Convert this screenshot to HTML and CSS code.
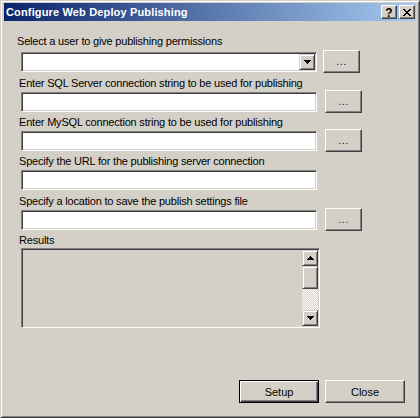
FILE: index.html
```html
<!DOCTYPE html>
<html>
<head>
<meta charset="utf-8">
<title>Configure Web Deploy Publishing</title>
<link rel="stylesheet" href="styles.css">
</head>
<body>
<div class="window">
  <div class="titlebar">
    <span class="title">Configure Web Deploy Publishing</span>
    <div class="caption-btns">
      <span class="cap-btn help">?</span>
      <span class="cap-btn close">
        <svg width="8" height="7" viewBox="0 0 8 7" shape-rendering="crispEdges"><path fill="#000" d="M0 0h2v1H0zM6 0h2v1H6zM1 1h2v1H1zM5 1h2v1H5zM2 2h4v1H2zM3 3h2v1H3zM2 4h4v1H2zM1 5h2v1H1zM5 5h2v1H5zM0 6h2v1H0zM6 6h2v1H6z"/></svg>
      </span>
    </div>
  </div>
  <div class="content">
    <div class="label first">Select a user to give publishing permissions</div>
    <div class="row">
      <div class="combo">
        <div class="combo-text"></div>
        <div class="drop">
          <svg width="7" height="4" viewBox="0 0 7 4" shape-rendering="crispEdges"><path fill="#000" d="M0 0h7v1H0zM1 1h5v1H1zM2 2h3v1H2zM3 3h1v1H3z"/></svg>
        </div>
      </div>
      <button class="btn dots first-dots">...</button>
    </div>

    <div class="label l2">Enter SQL Server connection string to be used for publishing</div>
    <div class="row">
      <div class="textbox"></div>
      <button class="btn dots">...</button>
    </div>

    <div class="label l3">Enter MySQL connection string to be used for publishing</div>
    <div class="row">
      <div class="textbox"></div>
      <button class="btn dots">...</button>
    </div>

    <div class="label l4">Specify the URL for the publishing server connection</div>
    <div class="row">
      <div class="textbox"></div>
    </div>

    <div class="label l5">Specify a location to save the publish settings file</div>
    <div class="row">
      <div class="textbox"></div>
      <button class="btn dots">...</button>
    </div>

    <div class="label l6">Results</div>
    <div class="results">
      <div class="results-body"></div>
      <div class="scrollbar">
        <div class="sb-btn">
          <svg width="7" height="4" viewBox="0 0 7 4" shape-rendering="crispEdges"><path fill="#000" d="M3 0h1v1H3zM2 1h3v1H2zM1 2h5v1H1zM0 3h7v1H0z"/></svg>
        </div>
        <div class="sb-thumb"></div>
        <div class="sb-track"></div>
        <div class="sb-btn">
          <svg width="7" height="4" viewBox="0 0 7 4" shape-rendering="crispEdges"><path fill="#000" d="M0 0h7v1H0zM1 1h5v1H1zM2 2h3v1H2zM3 3h1v1H3z"/></svg>
        </div>
      </div>
    </div>

    <div class="footer">
      <button class="btn action default">Setup</button>
      <button class="btn action">Close</button>
    </div>
  </div>
</div>
</body>
</html>
```

FILE: styles.css
```css
* { box-sizing: border-box; }

html, body {
  margin: 0;
  padding: 0;
}

body {
  width: 420px;
  height: 418px;
  overflow: hidden;
  background: #d4d0c8;
  font-family: "Liberation Sans", Arial, sans-serif;
  font-size: 11px;
  color: #000;
}

.window {
  width: 420px;
  height: 418px;
  border: 1px solid;
  border-color: #d4d0c8 #404040 #404040 #d4d0c8;
  box-shadow: inset 1px 1px #fff, inset -1px -1px #808080;
  padding: 2px 3px 3px 3px;
  display: flex;
  flex-direction: column;
  background: #d4d0c8;
}

.titlebar {
  height: 18px;
  flex: none;
  background: linear-gradient(to right, #0a246a, #a6caf0);
  display: flex;
  align-items: center;
  justify-content: space-between;
  padding-left: 2px;
}

.title {
  color: #fff;
  font-weight: bold;
  font-size: 11px;
  line-height: 18px;
  letter-spacing: 0.15px;
  white-space: nowrap;
}

.caption-btns {
  display: flex;
  gap: 2px;
  margin-right: 1px;
}

.cap-btn {
  width: 16px;
  height: 14px;
  background: #d4d0c8;
  border: 1px solid;
  border-color: #fff #404040 #404040 #fff;
  box-shadow: inset -1px -1px #808080;
  display: flex;
  align-items: center;
  justify-content: center;
}

.cap-btn.help {
  font-weight: bold;
  font-size: 12px;
  line-height: 12px;
  padding-top: 1px;
}

.content {
  flex: 1;
  display: flex;
  flex-direction: column;
  padding: 14px 0 0 17px;
}

.label {
  height: 13px;
  line-height: 13px;
  margin-left: -2px;
  letter-spacing: -0.2px;
  white-space: nowrap;
}

.label.first { margin-left: -4px; }
.label.l2 { margin-top: 4px; }
.label.l3 { margin-top: 3px; }
.label.l4 { margin-top: 3px; }
.label.l5 { margin-top: 4px; }
.label.l6 { margin-top: 3px; }

.row {
  display: flex;
  align-items: flex-start;
  height: 23px;
}

.label.first + .row { margin-top: 2px; }

.textbox,
.combo {
  width: 296px;
  height: 20px;
  margin-top: 2px;
  background: #fff;
  border: 1px solid;
  border-color: #808080 #fff #fff #808080;
  box-shadow: inset 1px 1px #404040, inset -1px -1px #d4d0c8;
}

.combo {
  display: flex;
  padding: 1px;
}

.combo-text { flex: 1; }

.drop {
  width: 16px;
  height: 16px;
  background: #d4d0c8;
  border: 1px solid;
  border-color: #d4d0c8 #404040 #404040 #d4d0c8;
  box-shadow: inset 1px 1px #fff, inset -1px -1px #808080;
  display: flex;
  align-items: center;
  justify-content: center;
}

.btn {
  background: #d4d0c8;
  border: 1px solid;
  border-color: #fff #404040 #404040 #fff;
  box-shadow: inset -1px -1px #808080;
  font-family: "Liberation Sans", Arial, sans-serif;
  font-size: 11px;
  color: #000;
  padding: 0;
  margin: 0;
}

.dots {
  width: 37px;
  height: 23px;
  margin-left: 8px;
  line-height: 21px;
  color: #101050;
  letter-spacing: 0.5px;
}

.first-dots { margin-left: 6px; }

.results {
  width: 299px;
  height: 80px;
  margin-top: 1px;
  display: flex;
  border: 1px solid;
  border-color: #808080 #fff #fff #808080;
  box-shadow: inset 1px 1px #404040, inset -1px -1px #d4d0c8;
  padding: 1px;
  background: #d4d0c8;
}

.results-body { flex: 1; }

.scrollbar {
  width: 16px;
  display: flex;
  flex-direction: column;
}

.sb-btn,
.sb-thumb {
  background: #d4d0c8;
  border: 1px solid;
  border-color: #d4d0c8 #404040 #404040 #d4d0c8;
  box-shadow: inset 1px 1px #fff, inset -1px -1px #808080;
}

.sb-btn {
  height: 16px;
  display: flex;
  align-items: center;
  justify-content: center;
}

.sb-thumb { height: 23px; }

.sb-track {
  flex: 1;
  background: repeating-conic-gradient(#fff 0 25%, #d4d0c8 0 50%) 0 0 / 2px 2px;
}

.footer {
  display: flex;
  justify-content: flex-end;
  gap: 6px;
  margin-top: 52px;
  padding-right: 11px;
}

.action {
  width: 80px;
  height: 23px;
}

.action.default {
  border: 1px solid #000;
  box-shadow: inset 1px 1px #fff, inset -1px -1px #404040, inset -2px -2px #808080;
}
```
